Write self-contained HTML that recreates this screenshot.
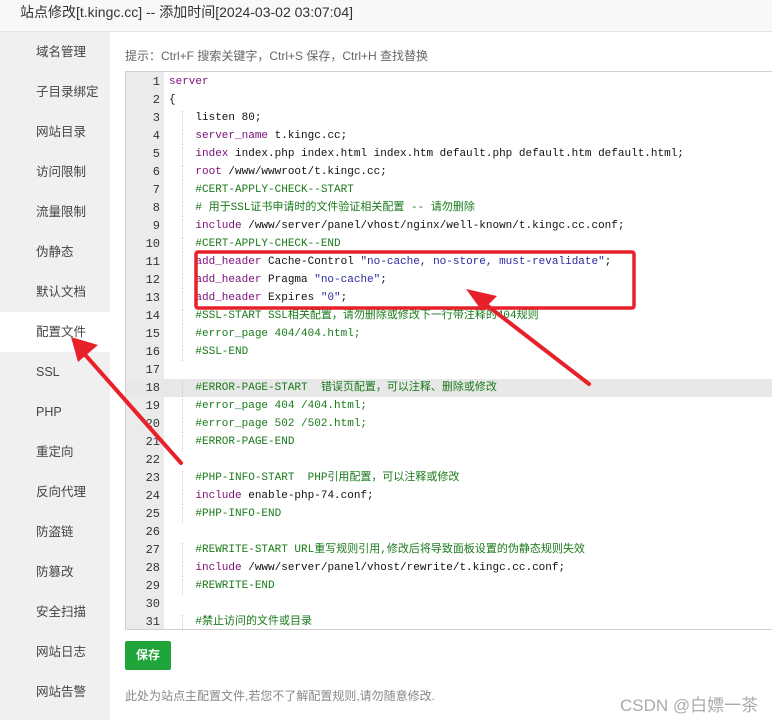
<!DOCTYPE html>
<html><head><meta charset="utf-8"><style>
*{margin:0;padding:0;box-sizing:border-box}
body{width:772px;height:720px;background:#fff;position:relative;overflow:hidden;font-family:"Liberation Sans","Noto Sans CJK SC",sans-serif;color:#333}
.title{position:absolute;left:0;top:0;width:772px;height:32px;background:#f8f8f8;border-bottom:1px solid #e6e6e6;font-size:14px;line-height:24px;padding-left:20px;color:#333}
.side{position:absolute;left:0;top:32px;width:110px;height:688px;background:#f0f0f0}
.side div{position:absolute;left:0;width:110px;height:40px;line-height:40px;padding-left:36px;font-size:12.5px;color:#444}
.side div.on{background:#fff}
.tip{position:absolute;left:125px;top:47px;font-size:12px;color:#666}
.code{position:absolute;left:125px;top:71px;width:660px;height:559px;border:1px solid #d0d0d0;overflow:hidden;background:#fff}
.gut{position:absolute;left:0;top:0;width:38px;height:100%;background:#ebebeb}
.ln{position:absolute;left:0;width:660px;height:18px;font-family:"Liberation Mono","Noto Sans CJK SC",monospace;font-size:11px;line-height:18px;white-space:pre}
.ln.hl{background:#e8e8e8}
.ln .n{position:absolute;left:0;width:34px;text-align:right;color:#333;font-size:12px}
.ln .t{position:absolute;left:43px;color:#111}
.ln .g{position:absolute;left:56px;top:2px;height:16px;border-left:1px dotted #ccc}
.ln .k{color:#7a0e7a}.ln .c{color:#1a7a1a}.ln .s{color:#2a2aa0}
.btn{position:absolute;left:125px;top:641px;width:46px;height:29px;background:#20a53a;border-radius:2px;color:#fff;font-size:12px;font-weight:bold;text-align:center;line-height:29px}
.foot{position:absolute;left:125px;top:687px;font-size:12px;color:#888}
.wm{position:absolute;left:620px;top:691px;font-size:17px;color:#aaa}
</style></head><body>
<div class="title">站点修改[t.kingc.cc] -- 添加时间[2024-03-02 03:07:04]</div>
<div class="side">
<div style="top:0">域名管理</div><div style="top:40px">子目录绑定</div><div style="top:80px">网站目录</div><div style="top:120px">访问限制</div><div style="top:160px">流量限制</div><div style="top:200px">伪静态</div><div style="top:240px">默认文档</div><div class="on" style="top:280px">配置文件</div><div style="top:320px">SSL</div><div style="top:360px">PHP</div><div style="top:400px">重定向</div><div style="top:440px">反向代理</div><div style="top:480px">防盗链</div><div style="top:520px">防篡改</div><div style="top:560px">安全扫描</div><div style="top:600px">网站日志</div><div style="top:640px">网站告警</div>
</div>
<div class="tip">提示：Ctrl+F 搜索关键字，Ctrl+S 保存，Ctrl+H 查找替换</div>
<div class="code"><div class="gut"></div>
<div class="ln" style="top:1px"><span class="n">1</span><span class="t"><span class="k">server</span></span></div>
<div class="ln" style="top:19px"><span class="n">2</span><span class="t">{</span></div>
<div class="ln" style="top:37px"><span class="n">3</span><span class="g"></span><span class="t">    listen 80;</span></div>
<div class="ln" style="top:55px"><span class="n">4</span><span class="g"></span><span class="t">    <span class="k">server_name</span> t.kingc.cc;</span></div>
<div class="ln" style="top:73px"><span class="n">5</span><span class="g"></span><span class="t">    <span class="k">index</span> index.php index.html index.htm default.php default.htm default.html;</span></div>
<div class="ln" style="top:91px"><span class="n">6</span><span class="g"></span><span class="t">    <span class="k">root</span> /www/wwwroot/t.kingc.cc;</span></div>
<div class="ln" style="top:109px"><span class="n">7</span><span class="g"></span><span class="t c">    #CERT-APPLY-CHECK--START</span></div>
<div class="ln" style="top:127px"><span class="n">8</span><span class="g"></span><span class="t c">    # 用于SSL证书申请时的文件验证相关配置 -- 请勿删除</span></div>
<div class="ln" style="top:145px"><span class="n">9</span><span class="g"></span><span class="t">    <span class="k">include</span> /www/server/panel/vhost/nginx/well-known/t.kingc.cc.conf;</span></div>
<div class="ln" style="top:163px"><span class="n">10</span><span class="g"></span><span class="t c">    #CERT-APPLY-CHECK--END</span></div>
<div class="ln" style="top:181px"><span class="n">11</span><span class="g"></span><span class="t">    <span class="k">add_header</span> Cache-Control <span class="s">"no-cache, no-store, must-revalidate"</span>;</span></div>
<div class="ln" style="top:199px"><span class="n">12</span><span class="g"></span><span class="t">    <span class="k">add_header</span> Pragma <span class="s">"no-cache"</span>;</span></div>
<div class="ln" style="top:217px"><span class="n">13</span><span class="g"></span><span class="t">    <span class="k">add_header</span> Expires <span class="s">"0"</span>;</span></div>
<div class="ln" style="top:235px"><span class="n">14</span><span class="g"></span><span class="t c">    #SSL-START SSL相关配置，请勿删除或修改下一行带注释的404规则</span></div>
<div class="ln" style="top:253px"><span class="n">15</span><span class="g"></span><span class="t c">    #error_page 404/404.html;</span></div>
<div class="ln" style="top:271px"><span class="n">16</span><span class="g"></span><span class="t c">    #SSL-END</span></div>
<div class="ln" style="top:289px"><span class="n">17</span></div>
<div class="ln hl" style="top:307px"><span class="n">18</span><span class="g"></span><span class="t c">    #ERROR-PAGE-START  错误页配置，可以注释、删除或修改</span></div>
<div class="ln" style="top:325px"><span class="n">19</span><span class="g"></span><span class="t c">    #error_page 404 /404.html;</span></div>
<div class="ln" style="top:343px"><span class="n">20</span><span class="g"></span><span class="t c">    #error_page 502 /502.html;</span></div>
<div class="ln" style="top:361px"><span class="n">21</span><span class="g"></span><span class="t c">    #ERROR-PAGE-END</span></div>
<div class="ln" style="top:379px"><span class="n">22</span></div>
<div class="ln" style="top:397px"><span class="n">23</span><span class="g"></span><span class="t c">    #PHP-INFO-START  PHP引用配置，可以注释或修改</span></div>
<div class="ln" style="top:415px"><span class="n">24</span><span class="g"></span><span class="t">    <span class="k">include</span> enable-php-74.conf;</span></div>
<div class="ln" style="top:433px"><span class="n">25</span><span class="g"></span><span class="t c">    #PHP-INFO-END</span></div>
<div class="ln" style="top:451px"><span class="n">26</span></div>
<div class="ln" style="top:469px"><span class="n">27</span><span class="g"></span><span class="t c">    #REWRITE-START URL重写规则引用,修改后将导致面板设置的伪静态规则失效</span></div>
<div class="ln" style="top:487px"><span class="n">28</span><span class="g"></span><span class="t">    <span class="k">include</span> /www/server/panel/vhost/rewrite/t.kingc.cc.conf;</span></div>
<div class="ln" style="top:505px"><span class="n">29</span><span class="g"></span><span class="t c">    #REWRITE-END</span></div>
<div class="ln" style="top:523px"><span class="n">30</span></div>
<div class="ln" style="top:541px"><span class="n">31</span><span class="g"></span><span class="t c">    #禁止访问的文件或目录</span></div>
</div>
<div class="btn">保存</div>
<div class="foot">此处为站点主配置文件,若您不了解配置规则,请勿随意修改.</div>
<div class="wm">CSDN @白嫖一茶</div>
<svg style="position:absolute;left:0;top:0" width="772" height="720">
<rect x="196" y="252" width="438" height="56" fill="none" stroke="#e8202a" stroke-width="3.5" rx="2"/>
<line x1="589" y1="384" x2="480" y2="300" stroke="#e8202a" stroke-width="4" stroke-linecap="round"/>
<polygon points="466,289 497,296 482,311" fill="#e8202a"/>
<line x1="181" y1="463" x2="80" y2="349" stroke="#e8202a" stroke-width="4" stroke-linecap="round"/>
<polygon points="71,337 98,345 78,362" fill="#e8202a"/>
</svg>
</body></html>
